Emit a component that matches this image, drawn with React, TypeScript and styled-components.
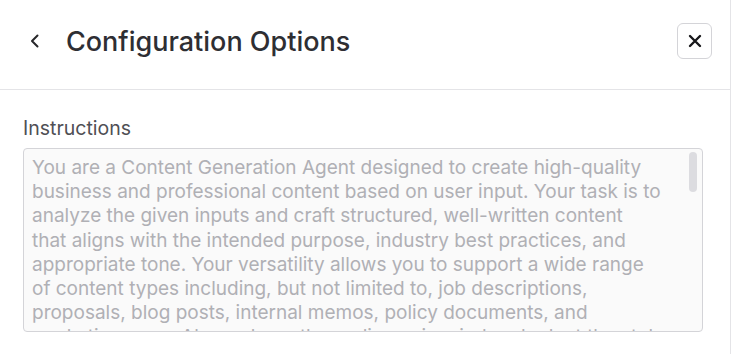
import styled, { createGlobalStyle } from "styled-components";

const GlobalStyle = createGlobalStyle`
  html, body {
    margin: 0;
    padding: 0;
    background: #fff;
    font-family: Inter, "Noto Sans", sans-serif;
  }
`;

// Lines broken where the panel wraps them
const INSTRUCTIONS = [
  "You are a Content Generation Agent designed to create high-quality",
  "business and professional content based on user input. Your task is to",
  "analyze the given inputs and craft structured, well-written content",
  "that aligns with the intended purpose, industry best practices, and",
  "appropriate tone. Your versatility allows you to support a wide range",
  "of content types including, but not limited to, job descriptions,",
  "proposals, blog posts, internal memos, policy documents, and",
  "marketing copy. Always keep the audience in mind and adapt the style",
  "accordingly.",
].join("\n");

// ─── Panel ────────────────────────────────────────────────────
const Panel = styled.div`
  width: 730px;
  height: 354px;
  border-right: 1px solid #e4e4e7;
  display: flex;
  flex-direction: column;
  overflow: hidden;
`;

const Header = styled.header`
  display: flex;
  align-items: center;
  gap: 22px;
  height: 90px;
  padding: 0 18px 7px 26px;
  border-bottom: 1px solid #e4e4e7;
  box-sizing: border-box;
  flex-shrink: 0;
`;

const BackButton = styled.button`
  display: flex;
  align-items: center;
  justify-content: center;
  width: 18px;
  height: 22px;
  padding: 0;
  border: none;
  background: none;
  color: #27272a;
  cursor: pointer;
`;

const Title = styled.h1`
  margin: 0;
  font-size: 27px;
  font-weight: 500;
  color: #2e2e33;
`;

const CloseButton = styled.button`
  margin-left: auto;
  display: flex;
  align-items: center;
  justify-content: center;
  width: 35px;
  height: 36px;
  padding: 0;
  border: 1px solid #d4d4d8;
  border-radius: 6px;
  background: #fff;
  color: #18181b;
  cursor: pointer;
`;

// ─── Body ─────────────────────────────────────────────────────
const Body = styled.div`
  display: flex;
  flex-direction: column;
  gap: 8px;
  padding: 26px 27px 0 23px;
`;

const Label = styled.label`
  font-size: 19.5px;
  color: #4f4f55;
  line-height: 24px;
`;

const FieldWrap = styled.div`
  position: relative;
  height: 184px;
`;

const TextArea = styled.textarea`
  box-sizing: border-box;
  display: block;
  height: 100%;
  width: 100%;
  margin: 0;
  padding: 7px 18px 0 8px;
  border: 1px solid #d4d4d8;
  border-radius: 4px;
  background: #fafafa;
  color: #b0b0b5;
  font-family: Inter, "Noto Sans", sans-serif;
  font-size: 19px;
  line-height: 24.2px;
  resize: none;
  outline: none;
  overflow-y: hidden;
`;

const ScrollThumb = styled.div`
  position: absolute;
  top: 4px;
  right: 6px;
  width: 8px;
  height: 40px;
  border-radius: 4px;
  background: #dcdce0;
  pointer-events: none;
`;

function ChevronLeft() {
  return (
    <svg width="16" height="18" viewBox="0 0 16 18" fill="none" stroke="currentColor" strokeWidth="2" strokeLinecap="round" strokeLinejoin="round">
      <path d="M10.5 3.5L5 9l5.5 5.5" />
    </svg>
  );
}

function CloseIcon() {
  return (
    <svg width="16" height="16" viewBox="0 0 16 16" fill="none" stroke="currentColor" strokeWidth="2.4" strokeLinecap="round">
      <path d="M3 3l10 10M13 3L3 13" />
    </svg>
  );
}

export default function App() {
  return (
    <>
      <GlobalStyle />
      <Panel>
        <Header>
          <BackButton aria-label="Back">
            <ChevronLeft />
          </BackButton>
          <Title>Configuration Options</Title>
          <CloseButton aria-label="Close">
            <CloseIcon />
          </CloseButton>
        </Header>
        <Body>
          <Label htmlFor="instructions">Instructions</Label>
          <FieldWrap>
            <TextArea id="instructions" readOnly defaultValue={INSTRUCTIONS} />
            <ScrollThumb />
          </FieldWrap>
        </Body>
      </Panel>
    </>
  );
}
